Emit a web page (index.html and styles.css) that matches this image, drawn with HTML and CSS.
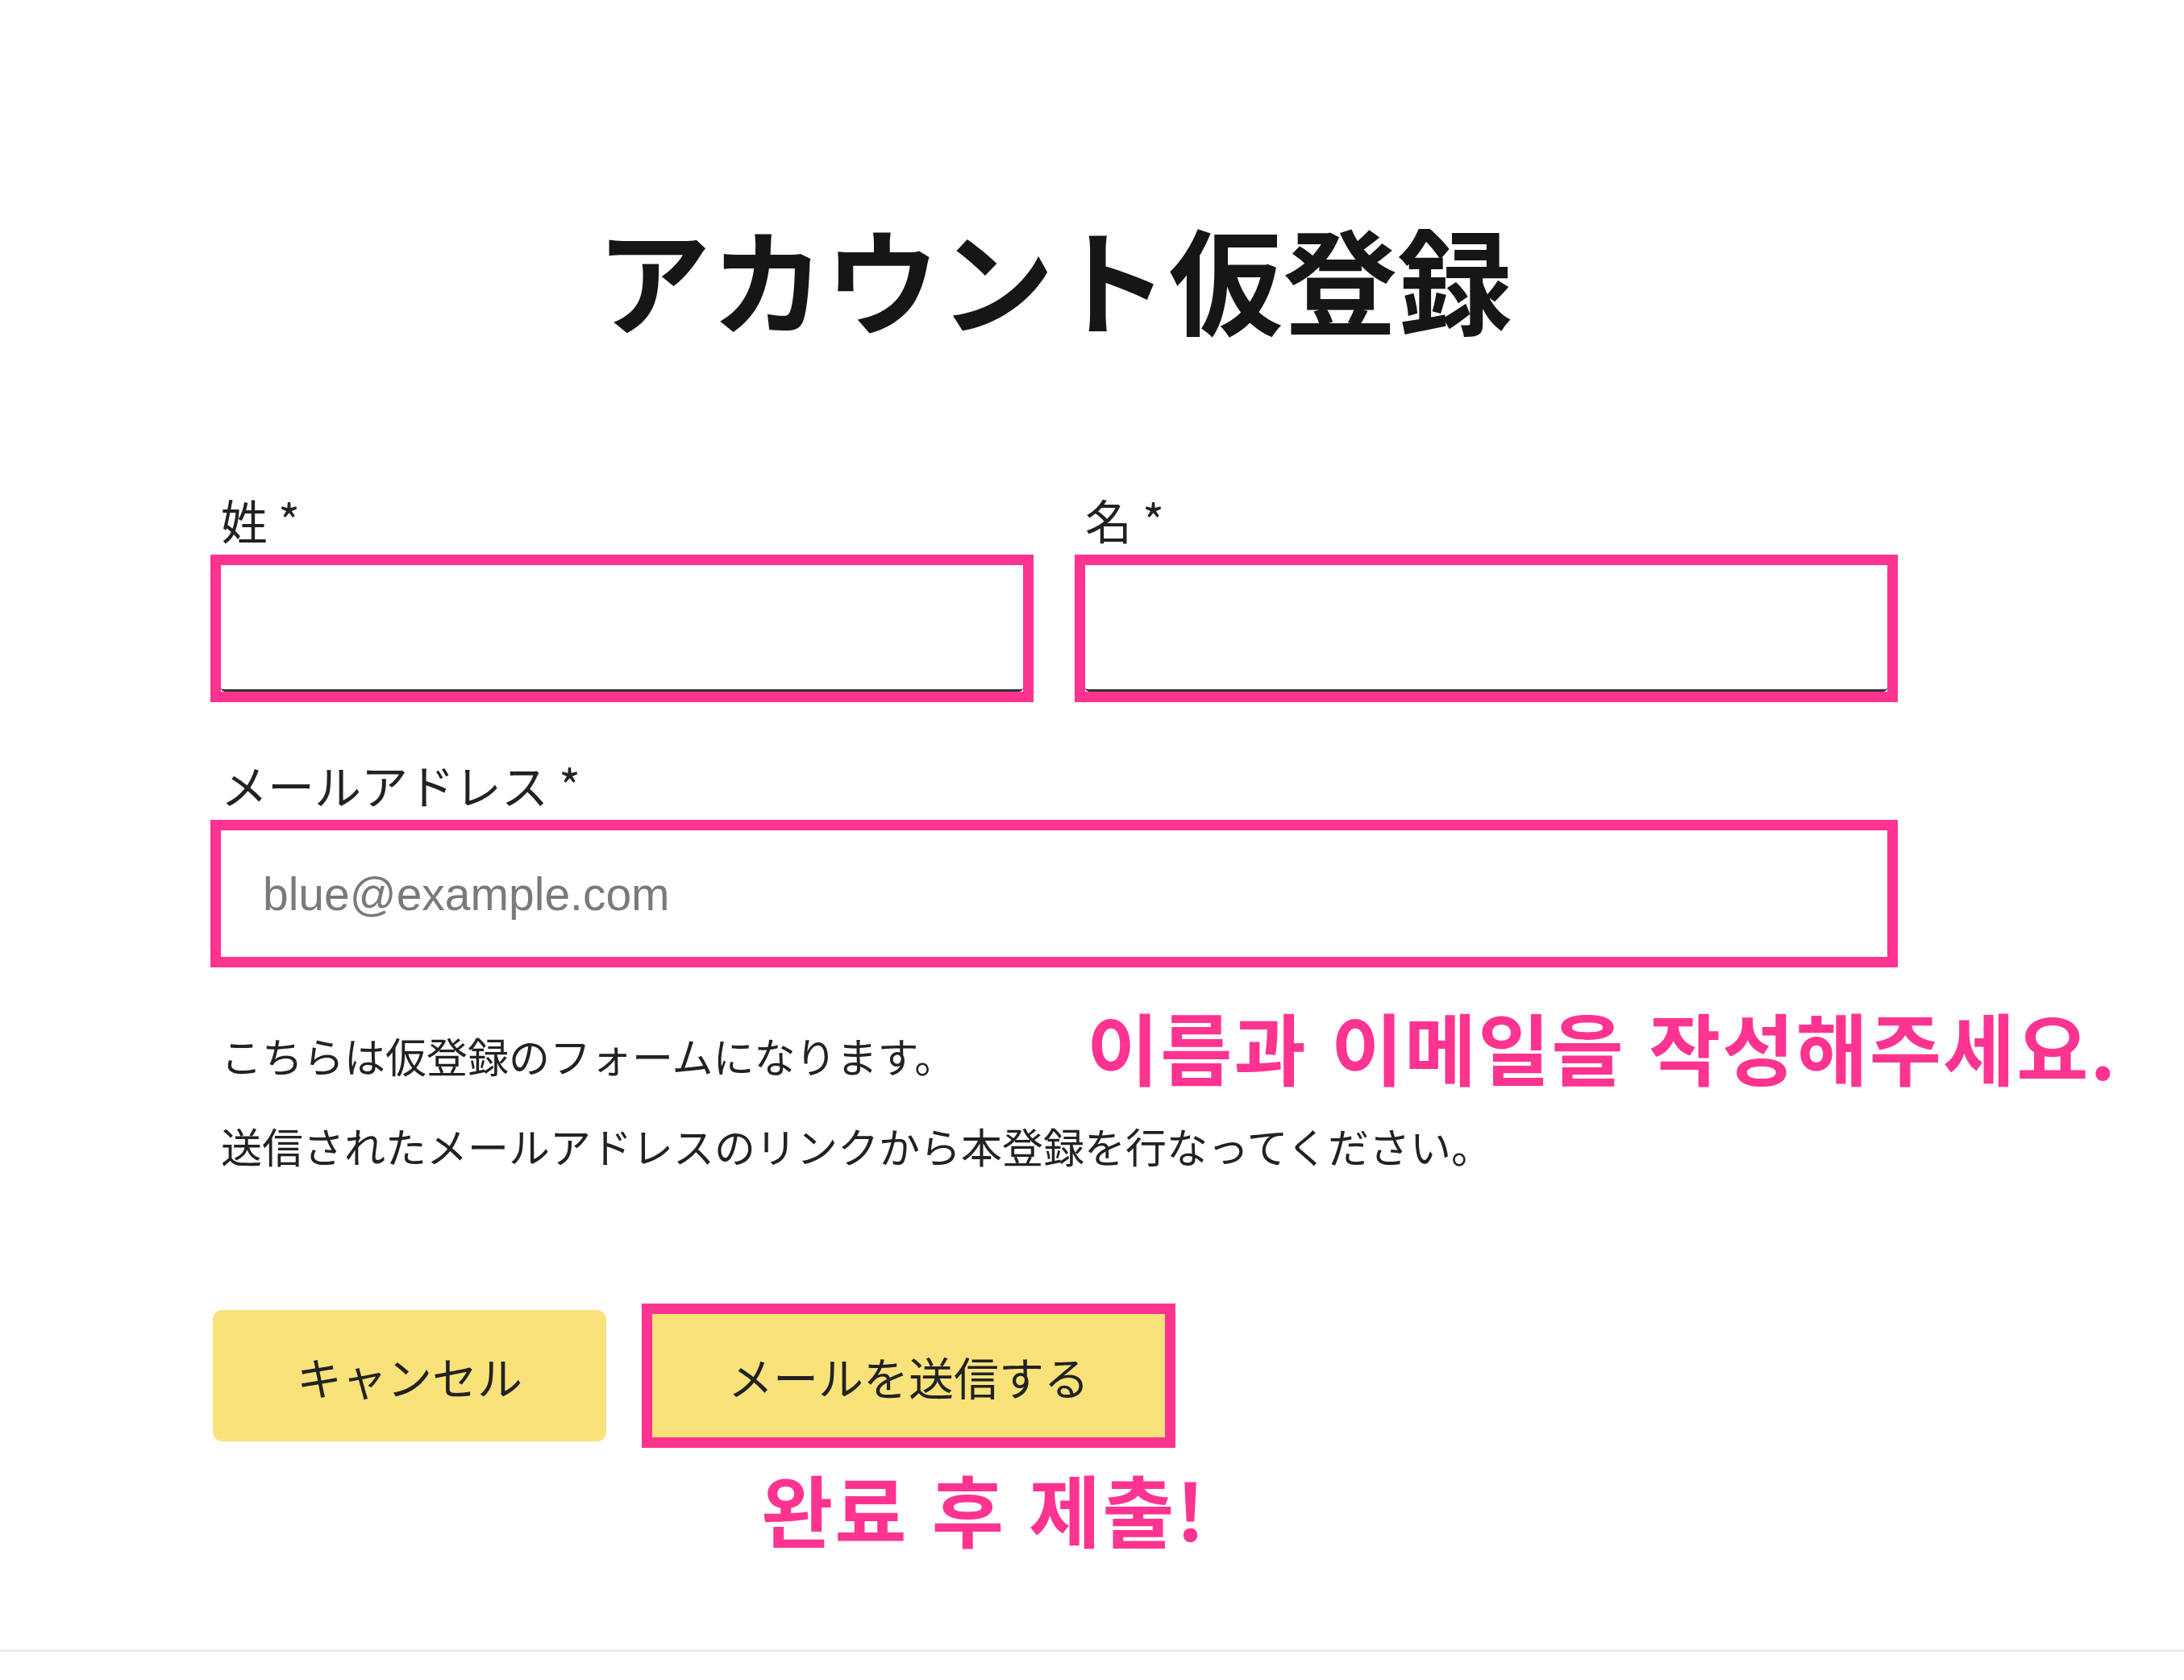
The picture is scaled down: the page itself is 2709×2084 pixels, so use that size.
FILE: index.html
```html
<!DOCTYPE html>
<html lang="ja">
<head>
<meta charset="utf-8">
<title>アカウント仮登録</title>
<link rel="stylesheet" href="styles.css">
</head>
<body>
<main class="page">
  <section class="form">
    <h1 class="title">アカウント仮登録</h1>

    <div class="name-row">
      <div class="field">
        <label class="label" for="last">姓 *</label>
        <div class="hl"><input class="input input-line" id="last" type="text"></div>
      </div>
      <div class="field">
        <label class="label" for="first">名 *</label>
        <div class="hl"><input class="input input-line" id="first" type="text"></div>
      </div>
    </div>

    <div class="field field-email">
      <label class="label" for="email">メールアドレス *</label>
      <div class="hl"><input class="input" id="email" type="email" placeholder="blue@example.com"></div>
    </div>

    <div class="notes">
      <p class="note">こちらは仮登録のフォームになります。</p>
      <p class="note note-2">送信されたメールアドレスのリンクから本登録を行なってください。</p>
      <span class="anno anno-fill" lang="ko">이름과 이메일을 작성해주세요.</span>
    </div>

    <div class="actions">
      <button class="btn btn-cancel" type="button">キャンセル</button>
      <button class="btn btn-send" type="submit">メールを送信する</button>
      <span class="anno anno-submit" lang="ko">완료 후 제출!</span>
    </div>
  </section>
  <div class="rule"></div>
</main>
</body>
</html>
```

FILE: styles.css
```css
* {
  box-sizing: border-box;
  margin: 0;
  padding: 0;
}

html,
body {
  background: #ffffff;
}

body {
  font-family: "Noto Sans CJK JP", "Noto Sans", sans-serif;
  color: #222222;
}

.page {
  width: 2709px;
  height: 2084px;
  overflow: hidden;
}

.form {
  position: relative;
  margin-left: 261px;
  width: 2093px;
  padding-top: 271px;
}

.title {
  font-size: 142px;
  line-height: 144px;
  font-weight: 700;
  text-align: center;
  color: #161616;
}

.name-row {
  margin-top: 201px;
  display: grid;
  grid-template-columns: 1fr 1fr;
  column-gap: 51px;
}

.field {
  display: flex;
  flex-direction: column;
}

.field-email {
  margin-top: 74px;
}

.label {
  display: block;
  font-size: 58px;
  line-height: 56px;
  padding-left: 13px;
  margin-bottom: 16px;
  color: #222222;
}

.hl {
  border: 13px solid #ff3390;
  height: 183px;
}

.input {
  display: block;
  width: 100%;
  height: 157px;
  border: none;
  border-radius: 0 0 5px 5px;
  background: #ffffff;
  padding-left: 52px;
  font-family: "Liberation Sans", Arial, sans-serif;
  font-size: 57px;
  color: #222222;
  outline: none;
}

.input-line {
  border-bottom: 3px solid #333333;
}

.input::placeholder {
  color: #7a7a7a;
}

.notes {
  position: relative;
  margin-top: 85px;
  padding-left: 13px;
}

.note {
  font-size: 51px;
  line-height: 49px;
  color: #222222;
  white-space: nowrap;
}

.note-2 {
  margin-top: 63px;
}

.anno {
  position: absolute;
  font-family: "Noto Sans CJK KR", "Noto Sans", sans-serif;
  font-weight: 700;
  font-size: 97px;
  line-height: 94px;
  letter-spacing: 2px;
  color: #ff3390;
  white-space: nowrap;
}

.anno-fill {
  top: -35px;
  left: 1087px;
}

.actions {
  position: relative;
  margin-top: 179px;
  padding-left: 3px;
  display: flex;
  gap: 52px;
}

.btn {
  height: 163px;
  border: none;
  background: #fae27b;
  font-family: "Noto Sans CJK JP", "Noto Sans", sans-serif;
  font-size: 56px;
  color: #222222;
  cursor: pointer;
}

.btn-cancel {
  width: 488px;
  border-radius: 12px;
}

.btn-send {
  width: 646px;
  border-radius: 0;
  outline: 13px solid #ff3390;
  outline-offset: -5px;
}

.anno-submit {
  top: 198px;
  left: 683px;
}

.rule {
  margin-top: 258px;
  height: 3px;
  background: #ebebeb;
}
```
